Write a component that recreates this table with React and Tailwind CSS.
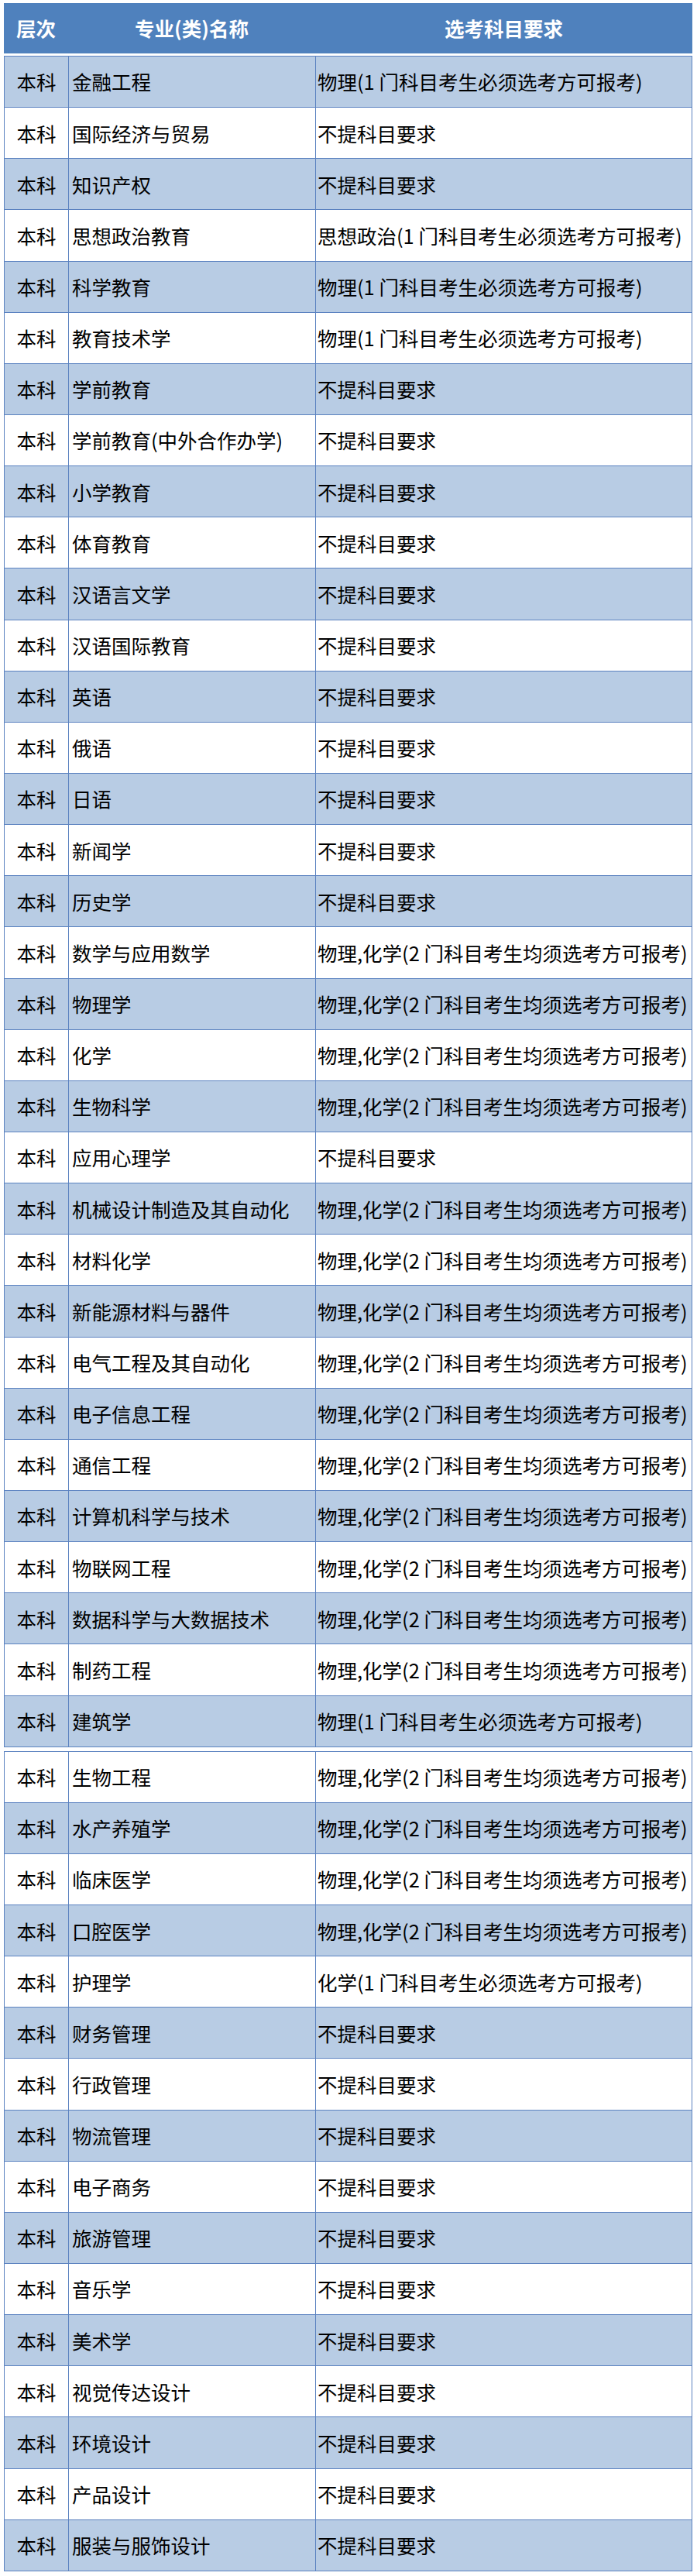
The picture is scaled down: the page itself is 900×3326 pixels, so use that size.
const P1 = "物理(1 门科目考生必须选考方可报考)"
const P2 = "物理,化学(2 门科目考生均须选考方可报考)"
const NO = "不提科目要求"

const part1 = [
  ["金融工程", P1],
  ["国际经济与贸易", NO],
  ["知识产权", NO],
  ["思想政治教育", "思想政治(1 门科目考生必须选考方可报考)"],
  ["科学教育", P1],
  ["教育技术学", P1],
  ["学前教育", NO],
  ["学前教育(中外合作办学)", NO],
  ["小学教育", NO],
  ["体育教育", NO],
  ["汉语言文学", NO],
  ["汉语国际教育", NO],
  ["英语", NO],
  ["俄语", NO],
  ["日语", NO],
  ["新闻学", NO],
  ["历史学", NO],
  ["数学与应用数学", P2],
  ["物理学", P2],
  ["化学", P2],
  ["生物科学", P2],
  ["应用心理学", NO],
  ["机械设计制造及其自动化", P2],
  ["材料化学", P2],
  ["新能源材料与器件", P2],
  ["电气工程及其自动化", P2],
  ["电子信息工程", P2],
  ["通信工程", P2],
  ["计算机科学与技术", P2],
  ["物联网工程", P2],
  ["数据科学与大数据技术", P2],
  ["制药工程", P2],
  ["建筑学", P1],
]

const part2 = [
  ["生物工程", P2],
  ["水产养殖学", P2],
  ["临床医学", P2],
  ["口腔医学", P2],
  ["护理学", "化学(1 门科目考生必须选考方可报考)"],
  ["财务管理", NO],
  ["行政管理", NO],
  ["物流管理", NO],
  ["电子商务", NO],
  ["旅游管理", NO],
  ["音乐学", NO],
  ["美术学", NO],
  ["视觉传达设计", NO],
  ["环境设计", NO],
  ["产品设计", NO],
  ["服装与服饰设计", NO],
]

const Row = ({ name, req, blue }) => (
  <div
    className={`flex h-[66.15px] border-b border-[#5b82c0] ${blue ? "bg-[#b8cce4]" : "bg-white"}`}
  >
    <div className="w-[83px] flex items-center justify-center border-r border-[#5b82c0]">本科</div>
    <div className="w-[319px] flex items-center pl-[4px] border-r border-[#5b82c0]">{name}</div>
    <div className="flex-1 flex items-center pl-[2px] whitespace-nowrap">{req}</div>
  </div>
)

export default function App() {
  return (
    <div className="w-[900px] h-[3326px] bg-white pt-[4px] pl-[5px] text-[25.5px] text-black font-['Microsoft_YaHei','Noto_Sans_CJK_SC',sans-serif]">
      <div className="w-[889px]">
        {/* Header */}
        <div className="flex h-[65px] bg-[#4f81bd] text-white font-bold">
          <div className="w-[83px] flex items-center justify-center">层次</div>
          <div className="w-[319px] flex items-center justify-center">专业(类)名称</div>
          <div className="flex-1 flex items-center justify-center">选考科目要求</div>
        </div>

        <div className="mt-[3px] border-x border-t border-[#5b82c0]">
          {part1.map(([name, req], i) => (
            <Row key={name} name={name} req={req} blue={i % 2 === 0} />
          ))}
        </div>

        <div className="mt-[5px] border-x border-t border-[#5b82c0]">
          {part2.map(([name, req], i) => (
            <Row key={name} name={name} req={req} blue={i % 2 === 1} />
          ))}
        </div>
      </div>
    </div>
  )
}
